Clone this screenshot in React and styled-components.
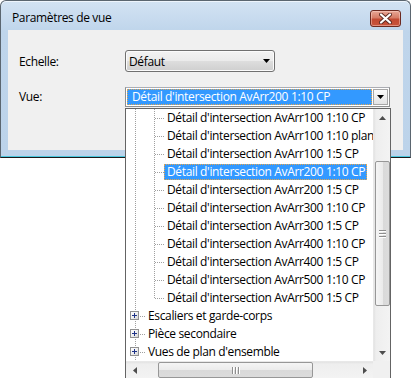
import styled, { createGlobalStyle, css } from 'styled-components';

const GlobalStyle = createGlobalStyle`
    html, body {
        margin: 0;
        padding: 0;
        background: #ffffff;
    }
    body {
        font-family: "Open Sans", "Noto Sans", sans-serif;
        font-size: 12px;
        color: #000;
    }
`;

const UI_FONT = `"Open Sans", "Noto Sans", sans-serif`;

// fenêtre

const Page = styled.div`
    position: relative;
    width: 411px;
    height: 378px;
    overflow: hidden;
`;

const Window = styled.div`
    width: 411px;
    box-sizing: border-box;
    border: 1px solid #5b6670;
    border-bottom-color: #1a1a1a;
    border-radius: 6px 6px 0 0;
    background: linear-gradient(#d3e3f3 0px, #bfd5eb 30px, #bcd3ea 100%);
    box-shadow: inset 0 1px 0 #eef5fc, inset 0 -1px 0 #49c6dc;
    padding: 0 7px 7px;
`;

const TitleBar = styled.div`
    height: 29px;
    display: flex;
    align-items: center;
    justify-content: space-between;
    padding-left: 4px;
`;

const Title = styled.span`
    font-family: ${UI_FONT};
    font-size: 12px;
    letter-spacing: -0.35px;
    color: #000;
    margin-top: 4px;
`;

const CloseButton = styled.div`
    width: 31px;
    height: 17px;
    margin-top: 6px;
    margin-right: 2px;
    box-sizing: border-box;
    border: 1px solid #6c2a20;
    border-radius: 3px;
    background: linear-gradient(#e8a796 0%, #d67c66 45%, #c24a33 55%, #c9553c 100%);
    box-shadow: inset 0 0 0 1px rgba(255, 220, 210, 0.45);
    display: flex;
    align-items: center;
    justify-content: center;
`;

const Client = styled.div`
    height: 120px;
    background: #f0f0f0;
    box-sizing: border-box;
    padding: 20px 0 0 11px;
    display: grid;
    grid-template-columns: 106px auto;
    grid-template-rows: 22px 20px;
    row-gap: 15px;
    align-items: center;
    justify-items: start;
`;

const FieldLabel = styled.span`
    font-family: ${UI_FONT};
    font-size: 12px;
    letter-spacing: -0.35px;
    color: #000;
    margin-top: ${(p) => p.$shift || 0}px;
`;

const ComboButton = styled.div`
    width: 150px;
    height: 22px;
    box-sizing: border-box;
    border: 1px solid #707070;
    border-radius: 3px;
    background: linear-gradient(#f3f3f3 0%, #ebebeb 48%, #dddddd 52%, #cfcfcf 100%);
    box-shadow: inset 0 0 0 1px #fbfbfb;
    display: flex;
    align-items: center;
    justify-content: space-between;
    padding: 0 4px 0 3px;
    font-family: ${UI_FONT};
    font-size: 12px;
    letter-spacing: -0.35px;
`;

const ComboEdit = styled.div`
    width: 265px;
    height: 20px;
    box-sizing: border-box;
    border: 1px solid #8e8f8f;
    border-top-color: #abadb3;
    background: #ffffff;
    display: flex;
    padding: 1px;
    gap: 1px;
`;

const SelectedValue = styled.div`
    flex: 1;
    background: #3399ff;
    outline: 1px dotted #e6a54a;
    outline-offset: -1px;
    color: #fff;
    font-family: ${UI_FONT};
    font-size: 12px;
    letter-spacing: -0.35px;
    line-height: 16px;
    padding-left: 5px;
    white-space: nowrap;
    overflow: hidden;
`;

const DropButton = styled.div`
    width: 15px;
    box-sizing: border-box;
    border: 1px solid #a7a7a7;
    background: linear-gradient(#fafafa, #e4e4e4);
    display: flex;
    align-items: center;
    justify-content: center;
`;

const Arrow = ({ dir = 'down', color = '#000', size = 7 }) => {
    const pts = {
        down: '0,0 7,0 3.5,4',
        up: '0,4 7,4 3.5,0',
        left: '4,0 4,7 0,3.5',
        right: '0,0 0,7 4,3.5',
    }[dir];
    const horiz = dir === 'left' || dir === 'right';
    return (
        <svg width={horiz ? 4 : size} height={horiz ? size : 4} viewBox={horiz ? '0 0 4 7' : '0 0 7 4'}>
            <polygon points={pts} fill={color} />
        </svg>
    );
};

// liste déroulante

const DropList = styled.div`
    position: absolute;
    top: 108px;
    left: 125px;
    width: 266px;
    height: 271px;
    box-sizing: border-box;
    border: 1px solid #646464;
    background: #fff;
    display: grid;
    grid-template-columns: 1fr 17px;
    grid-template-rows: 252px 17px;
`;

const Tree = styled.div`
    overflow: hidden;
`;

const Row = styled.div`
    height: 18px;
    display: flex;
    align-items: stretch;
`;

const Guide = styled.div`
    position: relative;
    width: 19px;
    flex: none;

    &::before {
        content: '';
        position: absolute;
        left: 9px;
        width: 1px;
        top: 0;
        background: repeating-linear-gradient(to bottom, #a0a0a0 0 1px, transparent 1px 2px);
        ${(p) =>
            p.$line === 'full'
                ? css`bottom: 0;`
                : p.$line === 'half'
                ? css`height: 9px;`
                : css`display: none;`}
    }

    &::after {
        content: '';
        position: absolute;
        top: 9px;
        left: 10px;
        right: 0;
        height: 1px;
        background: repeating-linear-gradient(to right, #a0a0a0 0 1px, transparent 1px 2px);
        display: ${(p) => (p.$branch ? 'block' : 'none')};
    }
`;

const PlusBox = styled.div`
    position: absolute;
    left: 4px;
    top: 4px;
    width: 9px;
    height: 9px;
    box-sizing: border-box;
    border: 1px solid #919191;
    background: linear-gradient(135deg, #ffffff 0%, #f0f0f0 50%, #d6d6d6 100%);
    display: flex;
    align-items: center;
    justify-content: center;
    z-index: 1;
`;

const Label = styled.span`
    font-family: ${UI_FONT};
    font-size: 12px;
    letter-spacing: -0.35px;
    line-height: 16px;
    height: 16px;
    margin-top: 1px;
    padding: 0 2px 0 3px;
    white-space: nowrap;
    color: ${(p) => (p.$selected ? '#fff' : '#000')};
    background: ${(p) => (p.$selected ? '#3399ff' : 'transparent')};
    outline: ${(p) => (p.$selected ? '1px dotted #e6a54a' : 'none')};
    outline-offset: -1px;
`;

// barres de défilement

const VScroll = styled.div`
    display: flex;
    flex-direction: column;
    background: linear-gradient(to right, #e3e3e3 0px, #eeeeee 2px, #f3f3f3 100%);
    border-left: 1px solid #e8e8e8;
`;

const HScroll = styled.div`
    display: flex;
    background: linear-gradient(#e3e3e3 0px, #eeeeee 2px, #f3f3f3 100%);
    border-top: 1px solid #e8e8e8;
`;

const ArrowCell = styled.div`
    flex: none;
    width: ${(p) => (p.$horizontal ? '17px' : 'auto')};
    height: ${(p) => (p.$horizontal ? 'auto' : '17px')};
    display: flex;
    align-items: center;
    justify-content: center;
`;

const Track = styled.div`
    flex: 1;
    display: flex;
    flex-direction: ${(p) => (p.$horizontal ? 'row' : 'column')};
`;

const Thumb = styled.div`
    box-sizing: border-box;
    border: 1px solid #979797;
    border-radius: 2px;
    display: flex;
    align-items: center;
    justify-content: center;
    gap: 2px;
    flex-direction: ${(p) => (p.$horizontal ? 'row' : 'column')};
    ${(p) =>
        p.$horizontal
            ? css`
                  margin: 0 0 0 ${p.$offset}px;
                  width: ${p.$length}px;
                  background: linear-gradient(#f5f5f5 0%, #ebebeb 50%, #d9d9d9 51%, #dcdcdc 100%);
              `
            : css`
                  margin: ${p.$offset}px 0 0 1px;
                  height: ${p.$length}px;
                  width: 15px;
                  background: linear-gradient(to right, #f5f5f5 0%, #ebebeb 50%, #d9d9d9 51%, #dcdcdc 100%);
              `}
`;

const Grip = styled.span`
    display: block;
    background: #8e8e8e;
    box-shadow: ${(p) => (p.$horizontal ? '1px 0 0 #fff' : '0 1px 0 #fff')};
    width: ${(p) => (p.$horizontal ? '1px' : '7px')};
    height: ${(p) => (p.$horizontal ? '7px' : '1px')};
`;

const Corner = styled.div`
    background: #f0f0f0;
`;

const items = [
    { text: "Détail d'intersection AvArr100 1:10 CP", level: 1 },
    { text: "Détail d'intersection AvArr100 1:10 plan", level: 1 },
    { text: "Détail d'intersection AvArr100 1:5 CP", level: 1 },
    { text: "Détail d'intersection AvArr200 1:10 CP", level: 1, selected: true },
    { text: "Détail d'intersection AvArr200 1:5 CP", level: 1 },
    { text: "Détail d'intersection AvArr300 1:10 CP", level: 1 },
    { text: "Détail d'intersection AvArr300 1:5 CP", level: 1 },
    { text: "Détail d'intersection AvArr400 1:10 CP", level: 1 },
    { text: "Détail d'intersection AvArr400 1:5 CP", level: 1 },
    { text: "Détail d'intersection AvArr500 1:10 CP", level: 1 },
    { text: "Détail d'intersection AvArr500 1:5 CP", level: 1, last: true },
    { text: 'Escaliers et garde-corps', level: 0, plus: true },
    { text: 'Pièce secondaire', level: 0, plus: true },
    { text: "Vues de plan d'ensemble", level: 0, plus: true },
];

function TreeItem({ item }) {
    return (
        <Row>
            <Guide $line="full" $branch={item.level === 0}>
                {item.plus && (
                    <PlusBox>
                        <svg width="5" height="5" viewBox="0 0 5 5">
                            <rect x="0" y="2" width="5" height="1" fill="#1e3287" />
                            <rect x="2" y="0" width="1" height="5" fill="#1e3287" />
                        </svg>
                    </PlusBox>
                )}
            </Guide>
            {item.level === 1 && <Guide $line={item.last ? 'half' : 'full'} $branch />}
            <Label $selected={item.selected}>{item.text}</Label>
        </Row>
    );
}

function GripLines({ horizontal }) {
    return (
        <>
            <Grip $horizontal={horizontal} />
            <Grip $horizontal={horizontal} />
            <Grip $horizontal={horizontal} />
        </>
    );
}

export default function App() {
    return (
        <>
            <GlobalStyle />
            <Page>
                <Window>
                    <TitleBar>
                        <Title>Paramètres de vue</Title>
                        <CloseButton>
                            <svg width="13" height="11" viewBox="0 0 13 11">
                                <path
                                    d="M2 1.5 L11 9.5 M11 1.5 L2 9.5"
                                    stroke="#5b2a22"
                                    strokeWidth="4"
                                    strokeLinecap="round"
                                />
                                <path
                                    d="M2 1.5 L11 9.5 M11 1.5 L2 9.5"
                                    stroke="#ffffff"
                                    strokeWidth="2.2"
                                    strokeLinecap="round"
                                />
                            </svg>
                        </CloseButton>
                    </TitleBar>

                    <Client>
                        <FieldLabel>Echelle:</FieldLabel>
                        <ComboButton>
                            <span>Défaut</span>
                            <Arrow />
                        </ComboButton>

                        <FieldLabel $shift={-1}>Vue:</FieldLabel>
                        <ComboEdit>
                            <SelectedValue>Détail d'intersection AvArr200 1:10 CP</SelectedValue>
                            <DropButton>
                                <Arrow />
                            </DropButton>
                        </ComboEdit>
                    </Client>
                </Window>

                {/* liste ouverte du combo Vue */}
                <DropList>
                    <Tree>
                        {items.map((item, i) => (
                            <TreeItem key={i} item={item} />
                        ))}
                    </Tree>

                    <VScroll>
                        <ArrowCell>
                            <Arrow dir="up" color="#4d4d4d" />
                        </ArrowCell>
                        <Track>
                            <Thumb $offset={35} $length={145}>
                                <GripLines />
                            </Thumb>
                        </Track>
                        <ArrowCell>
                            <Arrow dir="down" color="#4d4d4d" />
                        </ArrowCell>
                    </VScroll>

                    <HScroll>
                        <ArrowCell $horizontal>
                            <Arrow dir="left" color="#4d4d4d" />
                        </ArrowCell>
                        <Track $horizontal>
                            <Thumb $horizontal $offset={15} $length={155}>
                                <GripLines horizontal />
                            </Thumb>
                        </Track>
                        <ArrowCell $horizontal>
                            <Arrow dir="right" color="#4d4d4d" />
                        </ArrowCell>
                    </HScroll>

                    <Corner />
                </DropList>
            </Page>
        </>
    );
}
